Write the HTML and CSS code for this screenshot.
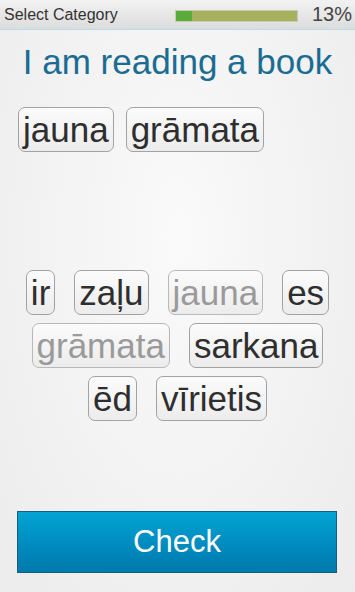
FILE: index.html
```html
<!DOCTYPE html>
<html>
<head>
<meta charset="utf-8">
<link rel="stylesheet" href="styles.css">
</head>
<body>
<div class="app">
  <header class="topbar">
    <span class="cat">Select Category</span>
    <div class="progress"><div class="progress-fill" style="width:13%"></div></div>
    <span class="pct">13%</span>
  </header>
  <h1 class="title">I am reading a book</h1>
  <div class="answer">
    <span class="chip">jauna</span>
    <span class="chip">grāmata</span>
  </div>
  <div class="pool">
    <div class="pool-row">
      <span class="chip">ir</span>
      <span class="chip">zaļu</span>
      <span class="chip used">jauna</span>
      <span class="chip">es</span>
    </div>
    <div class="pool-row">
      <span class="chip used">grāmata</span>
      <span class="chip">sarkana</span>
    </div>
    <div class="pool-row">
      <span class="chip">ēd</span>
      <span class="chip">vīrietis</span>
    </div>
  </div>
  <button class="check">Check</button>
</div>
</body>
</html>
```

FILE: styles.css
```css
html, body {
  margin: 0;
  padding: 0;
}
body {
  width: 355px;
  height: 592px;
  overflow: hidden;
  font-family: "Liberation Sans", Arial, sans-serif;
}
.app {
  width: 355px;
  height: 592px;
  display: flex;
  flex-direction: column;
  background: radial-gradient(ellipse at 50% 40%, #fafafa 0%, #f2f2f2 55%, #ececec 100%);
}
.topbar {
  height: 29px;
  display: flex;
  align-items: center;
  padding: 0 3px 0 4px;
  background: linear-gradient(#f2f2f2, #dcdcdc);
  border-bottom: 1px solid #b6dbec;
  flex-shrink: 0;
}
.cat {
  font-size: 16px;
  color: #333;
  flex: 1;
}
.progress {
  width: 121px;
  height: 10px;
  margin-top: 2px;
  background: #a6b05f;
  box-shadow: 0 0 0 1px #c9cdb0;
}
.progress-fill {
  height: 100%;
  background: #5aaa3c;
}
.pct {
  font-size: 20px;
  color: #444;
  margin-left: 15px;
}
.title {
  margin: 12px 0 0;
  font-weight: normal;
  font-size: 35px;
  line-height: 40px;
  color: #1b6c93;
  text-align: center;
}
.answer {
  display: flex;
  gap: 12px;
  margin: 25px 0 0 18px;
}
.chip {
  display: inline-block;
  font-size: 35px;
  line-height: 43px;
  padding: 0 4px;
  color: #2e2e2e;
  border: 1px solid #a2a2a2;
  border-radius: 7px;
  background: linear-gradient(#fbfbfb, #ececec);
}
.chip.used {
  color: #9a9a9a;
  border-color: #b8b8b8;
}
.pool {
  margin-top: 118px;
  display: flex;
  flex-direction: column;
  align-items: center;
  gap: 8px;
}
.pool-row {
  display: flex;
  gap: 19px;
  justify-content: center;
}
.check {
  margin: 90px 0 0 17px;
  width: 320px;
  height: 62px;
  border: 1px solid #1a5c7c;
  background: linear-gradient(#04a4d4, #0089bd 60%, #007aab);
  color: #fff;
  font-family: "Liberation Sans", Arial, sans-serif;
  font-size: 31px;
  padding: 0;
}
```
